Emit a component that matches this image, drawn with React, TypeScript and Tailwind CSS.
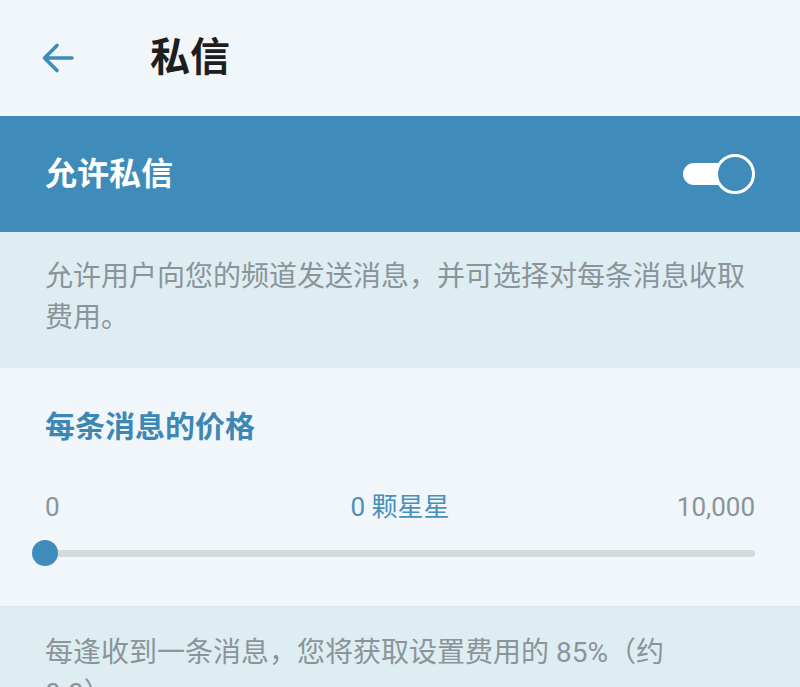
const font = { fontFamily: 'Roboto, "Noto Sans CJK SC", sans-serif' }

function BackArrow() {
  return (
    <svg width="34" height="32" viewBox="0 0 34 32" fill="none">
      <path
        d="M31 16H4M16 3.5L3.5 16L16 28.5"
        stroke="#3f8bb9"
        strokeWidth="3.6"
        strokeLinecap="round"
        strokeLinejoin="round"
      />
    </svg>
  )
}

function Toggle() {
  return (
    <div className="relative w-[72px] h-[40px]">
      <div className="absolute left-0 top-[9px] w-[58px] h-[22px] rounded-full bg-white" />
      <div className="absolute right-0 top-0 w-[40px] h-[40px] rounded-full border-[3px] border-white bg-[#3f8bb9]" />
    </div>
  )
}

export default function App() {
  return (
    <div className="w-[800px] h-[687px] overflow-hidden bg-[#f0f6f9]" style={font}>
      {/* header */}
      <div className="h-[116px] flex items-center bg-[#f0f6f9]">
        <div className="ml-[41px] flex items-center">
          <BackArrow />
        </div>
        <h1 className="ml-[75px] text-[40px] font-bold text-[#1e1e1e] leading-none">私信</h1>
      </div>

      {/* enable row */}
      <div className="h-[116px] flex items-center justify-between px-[45px] bg-[#3f8bb9]">
        <span className="text-[32px] font-bold text-white leading-none">允许私信</span>
        <Toggle />
      </div>

      {/* description */}
      <div className="bg-[#deedf2] px-[45px] pt-[24px] pb-[30px]">
        <p className="text-[28px] leading-[41px] text-[#8a9499]">
          允许用户向您的频道发送消息，并可选择对每条消息收取费用。
        </p>
      </div>

      {/* price */}
      <div className="bg-[#f0f6f9] px-[45px] pt-[39px] pb-[41px] border-b border-[#dde7ec]">
        <h2 className="text-[30px] leading-[40px] font-bold text-[#3d87b5]">每条消息的价格</h2>
        <div className="mt-[44px] h-[32px] flex items-center justify-between text-[26px] text-[#8a9499]">
          <span className="w-[80px]">0</span>
          <span className="text-[#4a90ba]">0 颗星星</span>
          <span className="w-[80px] text-right">10,000</span>
        </div>
        <div className="mt-[18px] h-[24px] relative flex items-center">
          <div className="w-full h-[7px] rounded-full bg-[#d4d9dc]" />
          <div className="absolute left-[-13px] top-[-1px] w-[26px] h-[26px] rounded-full bg-[#3f8bb9]" />
        </div>
      </div>

      {/* bottom note */}
      <div className="bg-[#deedf2] px-[45px] pt-[25px] pb-[30px]">
        <p className="text-[28px] leading-[41px] text-[#8a9499]">
          每逢收到一条消息，您将获取设置费用的 85%（约
          <br />
          0.0）
        </p>
      </div>
    </div>
  )
}
